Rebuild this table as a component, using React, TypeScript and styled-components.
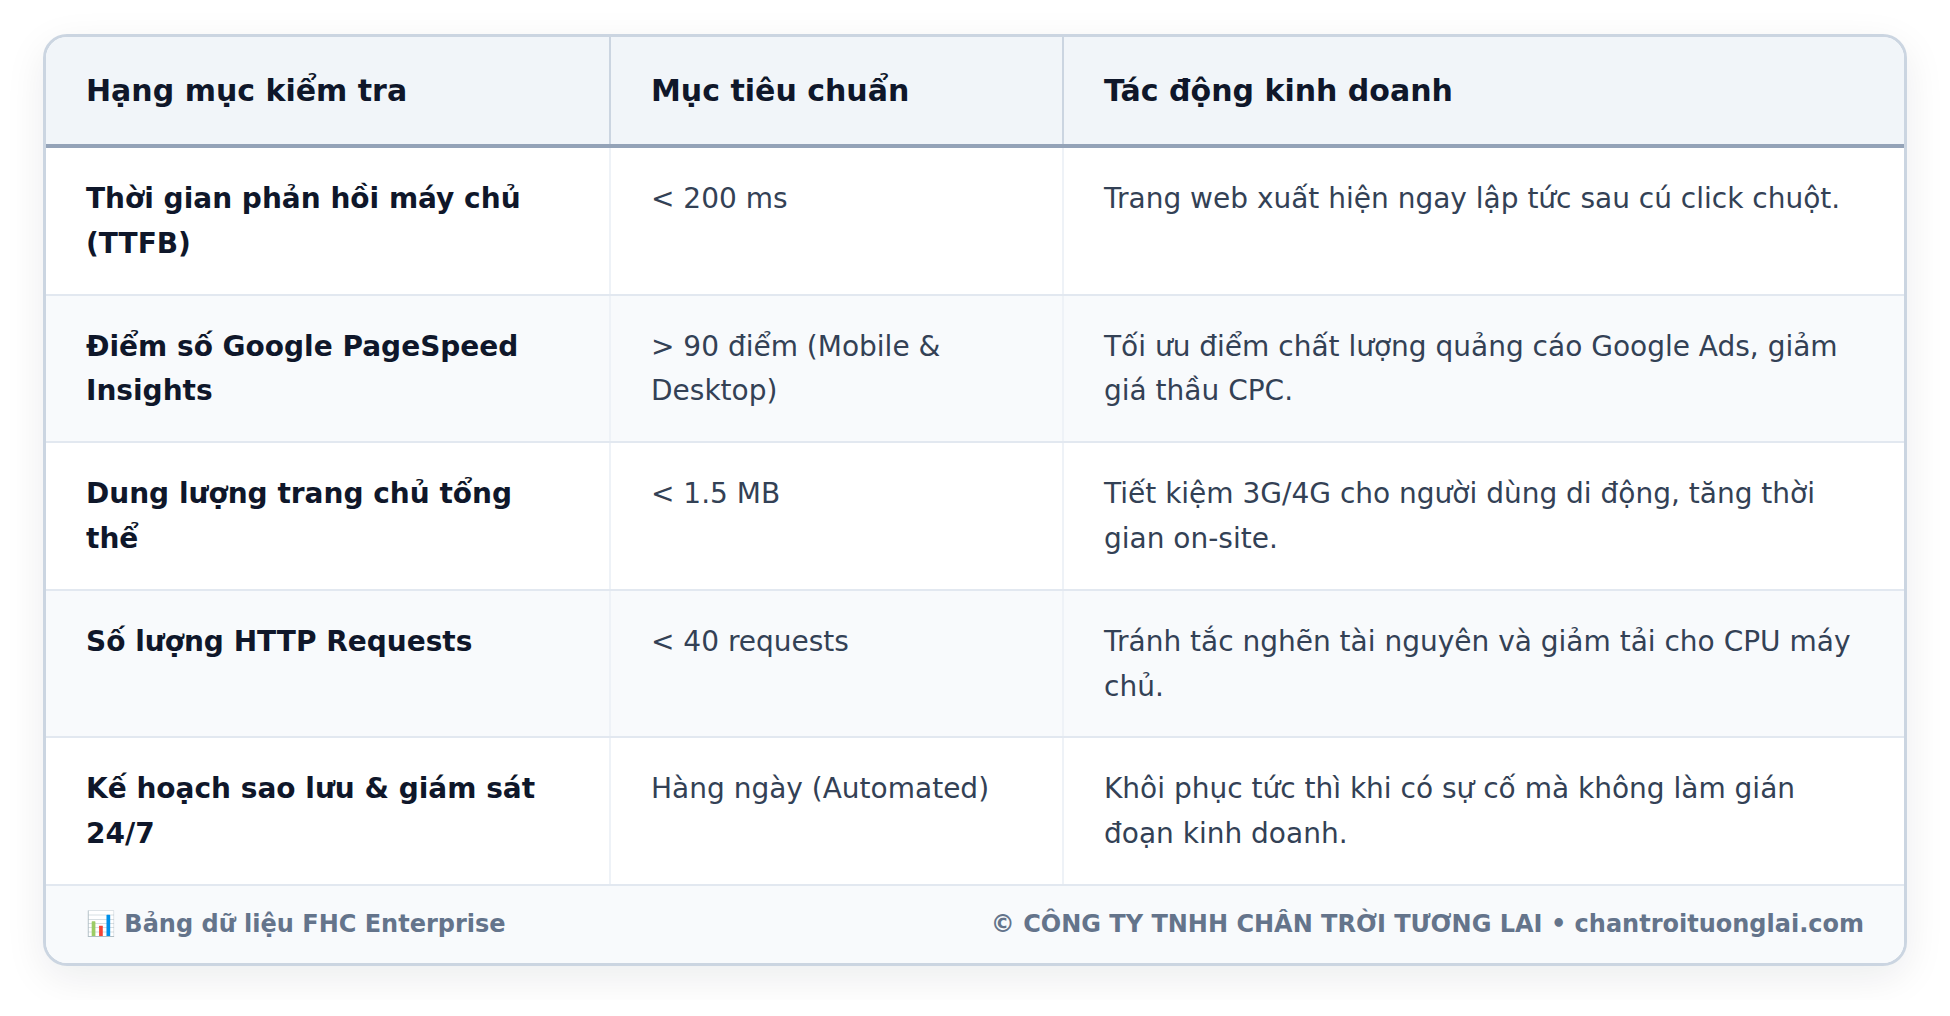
import styled, { createGlobalStyle } from "styled-components";

const GlobalStyle = createGlobalStyle`
  html, body {
    margin: 0;
    padding: 0;
    background: #ffffff;
    font-family: "DejaVu Sans", "Noto Sans", sans-serif;
  }
`;

const Page = styled.div`
  padding: 34px 43px;
`;

const Card = styled.div`
  border: 3px solid #cbd5e1;
  border-radius: 24px;
  overflow: hidden;
  background: #ffffff;
  box-shadow: 0 12px 40px rgba(15, 23, 42, 0.08);
`;

const Row = styled.div<{ $head?: boolean; $alt?: boolean }>`
  display: grid;
  grid-template-columns: 563px 453px 1fr;
  background: ${(p) => (p.$head ? "#f1f5f9" : p.$alt ? "#f8fafc" : "#ffffff")};
  border-bottom: ${(p) => (p.$head ? "4px solid #94a3b8" : "2px solid #e2e8f0")};
`;

const HeadCell = styled.div`
  padding: 30px 40px 29px;
  font-size: 30px;
  line-height: 48px;
  font-weight: bold;
  color: #0f172a;
  & + & {
    border-left: 2px solid #cbd5e1;
  }
`;

const Cell = styled.div<{ $strong?: boolean }>`
  padding: 29px 40px 27px;
  font-size: 28px;
  line-height: 1.6;
  font-weight: ${(p) => (p.$strong ? "bold" : "normal")};
  color: ${(p) => (p.$strong ? "#0f172a" : "#334155")};
  & + & {
    border-left: 2px solid #eef2f7;
  }
`;

const Footer = styled.div`
  display: flex;
  justify-content: space-between;
  align-items: center;
  padding: 19px 40px 20px;
  background: #f8fafc;
  font-size: 24px;
  line-height: 1.6;
  font-weight: bold;
  color: #64748b;
`;

const rows = [
  ["Thời gian phản hồi máy chủ (TTFB)", "< 200 ms", "Trang web xuất hiện ngay lập tức sau cú click chuột."],
  ["Điểm số Google PageSpeed Insights", "> 90 điểm (Mobile & Desktop)", "Tối ưu điểm chất lượng quảng cáo Google Ads, giảm giá thầu CPC."],
  ["Dung lượng trang chủ tổng thể", "< 1.5 MB", "Tiết kiệm 3G/4G cho người dùng di động, tăng thời gian on-site."],
  ["Số lượng HTTP Requests", "< 40 requests", "Tránh tắc nghẽn tài nguyên và giảm tải cho CPU máy chủ."],
  ["Kế hoạch sao lưu & giám sát 24/7", "Hàng ngày (Automated)", "Khôi phục tức thì khi có sự cố mà không làm gián đoạn kinh doanh."],
];

export default function App() {
  return (
    <Page>
      <GlobalStyle />
      <Card>
        <Row $head>
          <HeadCell>Hạng mục kiểm tra</HeadCell>
          <HeadCell>Mục tiêu chuẩn</HeadCell>
          <HeadCell>Tác động kinh doanh</HeadCell>
        </Row>
        {rows.map((r, i) => (
          <Row key={i} $alt={i % 2 === 1}>
            <Cell $strong>{r[0]}</Cell>
            <Cell>{r[1]}</Cell>
            <Cell>{r[2]}</Cell>
          </Row>
        ))}
        <Footer>
          <span>📊 Bảng dữ liệu FHC Enterprise</span>
          <span>© CÔNG TY TNHH CHÂN TRỜI TƯƠNG LAI • chantroituonglai.com</span>
        </Footer>
      </Card>
    </Page>
  );
}
